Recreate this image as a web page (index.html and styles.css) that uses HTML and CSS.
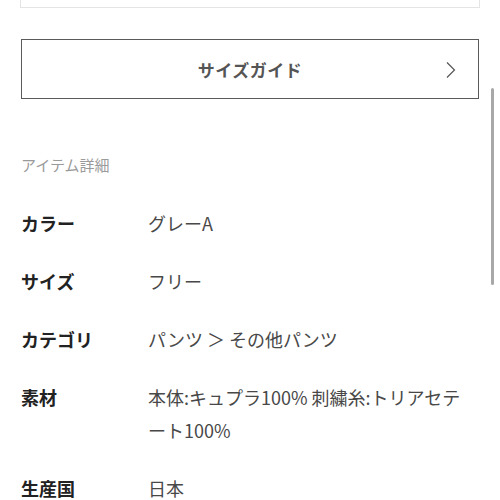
FILE: index.html
```html
<!DOCTYPE html>
<html lang="ja">
<head>
<meta charset="utf-8">
<link rel="stylesheet" href="styles.css">
</head>
<body>
<div class="page">
  <div class="top-box"></div>
  <a class="guide-btn">
    <span class="guide-label">サイズガイド</span>
    <svg class="chevron" width="12" height="18" viewBox="0 0 12 18"><path d="M2 1.5 L9.5 9 L2 16.5" fill="none" stroke="#555" stroke-width="1.2"/></svg>
  </a>
  <h2 class="section-title">アイテム詳細</h2>
  <dl class="details">
    <div class="row"><dt>カラー</dt><dd>グレーA</dd></div>
    <div class="row"><dt>サイズ</dt><dd>フリー</dd></div>
    <div class="row"><dt>カテゴリ</dt><dd>パンツ ＞ その他パンツ</dd></div>
    <div class="row"><dt>素材</dt><dd>本体:キュプラ100% 刺繍糸:トリアセテート100%</dd></div>
    <div class="row"><dt>生産国</dt><dd>日本</dd></div>
  </dl>
</div>
<div class="scrollbar"></div>
</body>
</html>
```
FILE: styles.css
```css
html, body {
  margin: 0;
  padding: 0;
  background: #fff;
  font-family: "Noto Sans CJK JP", "Noto Sans", sans-serif;
  overflow: hidden;
}
.page {
  padding: 0 21px 0 21px;
  width: 458px;
}
.top-box {
  height: 7px;
  border: 1px solid #e4e4e4;
  border-top: none;
  width: 458px;
  box-sizing: content-box;
  margin-left: -1px;
}
.guide-btn {
  margin-top: 31px;
  height: 58px;
  border: 1px solid #5a5a5a;
  display: flex;
  align-items: center;
  justify-content: center;
  position: relative;
}
.guide-label {
  font-size: 17px;
  font-weight: 700;
  color: #555;
  letter-spacing: 0.5px;
}
.chevron {
  position: absolute;
  right: 21px;
  top: 21px;
}
.section-title {
  margin: 54px 0 0 0;
  font-size: 15px;
  line-height: 24px;
  font-weight: 400;
  color: #9a9a9a;
}
.details {
  margin: 30px 0 0 0;
  display: flex;
  flex-direction: column;
  gap: 25px;
}
.row {
  display: grid;
  grid-template-columns: 127px 1fr;
  font-size: 18px;
  line-height: 33px;
}
.row dt {
  font-weight: 700;
  color: #222;
}
.row dd {
  margin: 0;
  color: #484848;
  padding-right: 4px;
}
.scrollbar {
  position: absolute;
  left: 491px;
  top: 88px;
  width: 3px;
  height: 197px;
  background: #a8a8a8;
  border-radius: 2px;
}
```
